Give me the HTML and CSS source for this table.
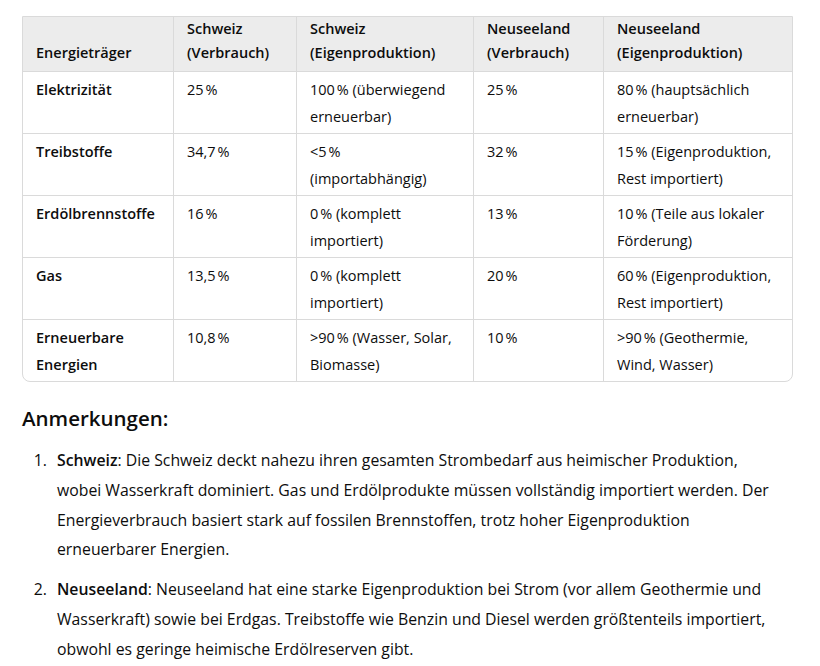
FILE: index.html
```html
<!DOCTYPE html>
<html lang="de">
<head>
<meta charset="utf-8">
<title>Energieträger Schweiz / Neuseeland</title>
<link rel="stylesheet" href="styles.css">
</head>
<body>
<div class="page">
  <div class="table-wrap">
    <table class="energy">
      <thead>
        <tr>
          <th class="c1">Energieträger</th>
          <th class="c2">Schweiz (Verbrauch)</th>
          <th class="c3">Schweiz (Eigenproduktion)</th>
          <th class="c4">Neuseeland (Verbrauch)</th>
          <th class="c5">Neuseeland (Eigenproduktion)</th>
        </tr>
      </thead>
      <tbody>
        <tr>
          <td class="label">Elektrizität</td>
          <td>25&#8239;%</td>
          <td>100&#8239;% (überwiegend erneuerbar)</td>
          <td>25&#8239;%</td>
          <td>80&#8239;% (hauptsächlich erneuerbar)</td>
        </tr>
        <tr>
          <td class="label">Treibstoffe</td>
          <td>34,7&#8239;%</td>
          <td>&lt;5&#8239;% (importabhängig)</td>
          <td>32&#8239;%</td>
          <td>15&#8239;% (Eigenproduktion, Rest importiert)</td>
        </tr>
        <tr>
          <td class="label">Erdölbrennstoffe</td>
          <td>16&#8239;%</td>
          <td>0&#8239;% (komplett importiert)</td>
          <td>13&#8239;%</td>
          <td>10&#8239;% (Teile aus lokaler Förderung)</td>
        </tr>
        <tr>
          <td class="label">Gas</td>
          <td>13,5&#8239;%</td>
          <td>0&#8239;% (komplett importiert)</td>
          <td>20&#8239;%</td>
          <td>60&#8239;% (Eigenproduktion, Rest importiert)</td>
        </tr>
        <tr>
          <td class="label">Erneuerbare Energien</td>
          <td>10,8&#8239;%</td>
          <td>&gt;90&#8239;% (Wasser, Solar, Biomasse)</td>
          <td>10&#8239;%</td>
          <td>&gt;90&#8239;% (Geothermie, Wind, Wasser)</td>
        </tr>
      </tbody>
    </table>
  </div>

  <h3 class="notes-title">Anmerkungen:</h3>
  <ol class="notes">
    <li><strong>Schweiz</strong>: Die Schweiz deckt nahezu ihren gesamten Strombedarf aus heimischer Produktion, wobei Wasserkraft dominiert. Gas und Erdölprodukte müssen vollständig importiert werden. Der Energieverbrauch basiert stark auf fossilen Brennstoffen, trotz hoher Eigenproduktion erneuerbarer Energien.</li>
    <li><strong>Neuseeland</strong>: Neuseeland hat eine starke Eigenproduktion bei Strom (vor allem Geothermie und Wasserkraft) sowie bei Erdgas. Treibstoffe wie Benzin und Diesel werden größtenteils importiert, obwohl es geringe heimische Erdölreserven gibt.</li>
  </ol>
</div>
</body>
</html>
```

FILE: styles.css
```css
html, body {
  margin: 0;
  padding: 0;
  background: #ffffff;
}

body {
  font-family: "Open Sans", "Noto Sans", "DejaVu Sans", sans-serif;
  color: #0d0d0d;
}

.page {
  padding: 16px 22px 0 22px;
}

.table-wrap {
  box-sizing: border-box;
  width: 771px;
  border: 1px solid #dadada;
  border-radius: 0 0 8px 8px;
  overflow: hidden;
}

.energy {
  width: 769px;
  table-layout: fixed;
  border-collapse: separate;
  border-spacing: 0;
  font-size: 14.5px;
}

.energy th,
.energy td {
  box-sizing: border-box;
  padding: 4px 13px 3px 13px;
  line-height: 27px;
  text-align: left;
  vertical-align: top;
  border-right: 1px solid #dadada;
  border-bottom: 1px solid #dadada;
}

.energy th:last-child,
.energy td:last-child {
  border-right: none;
}

.energy tbody tr:last-child td {
  border-bottom: none;
}

.energy thead th {
  background: #ececec;
  font-weight: 600;
  vertical-align: bottom;
  line-height: 24px;
  padding: 0 13px 6px 13px;
}

.energy .c1 { width: 151px; }
.energy .c2 { width: 123px; }
.energy .c3 { width: 177px; }
.energy .c4 { width: 130px; }
.energy .c5 { width: 188px; }

.energy .label {
  font-weight: 600;
}

.notes-title {
  margin: 22px 0 0 0;
  font-size: 20.5px;
  line-height: 28px;
  font-weight: 600;
}

.notes {
  margin: 14px 18px 0 0;
  padding: 0 0 0 29px;
  font-size: 15.8px;
  line-height: 29.8px;
}

.notes li {
  padding-left: 6px;
}

.notes li + li {
  margin-top: 10px;
}

.notes strong {
  font-weight: 600;
}
```
